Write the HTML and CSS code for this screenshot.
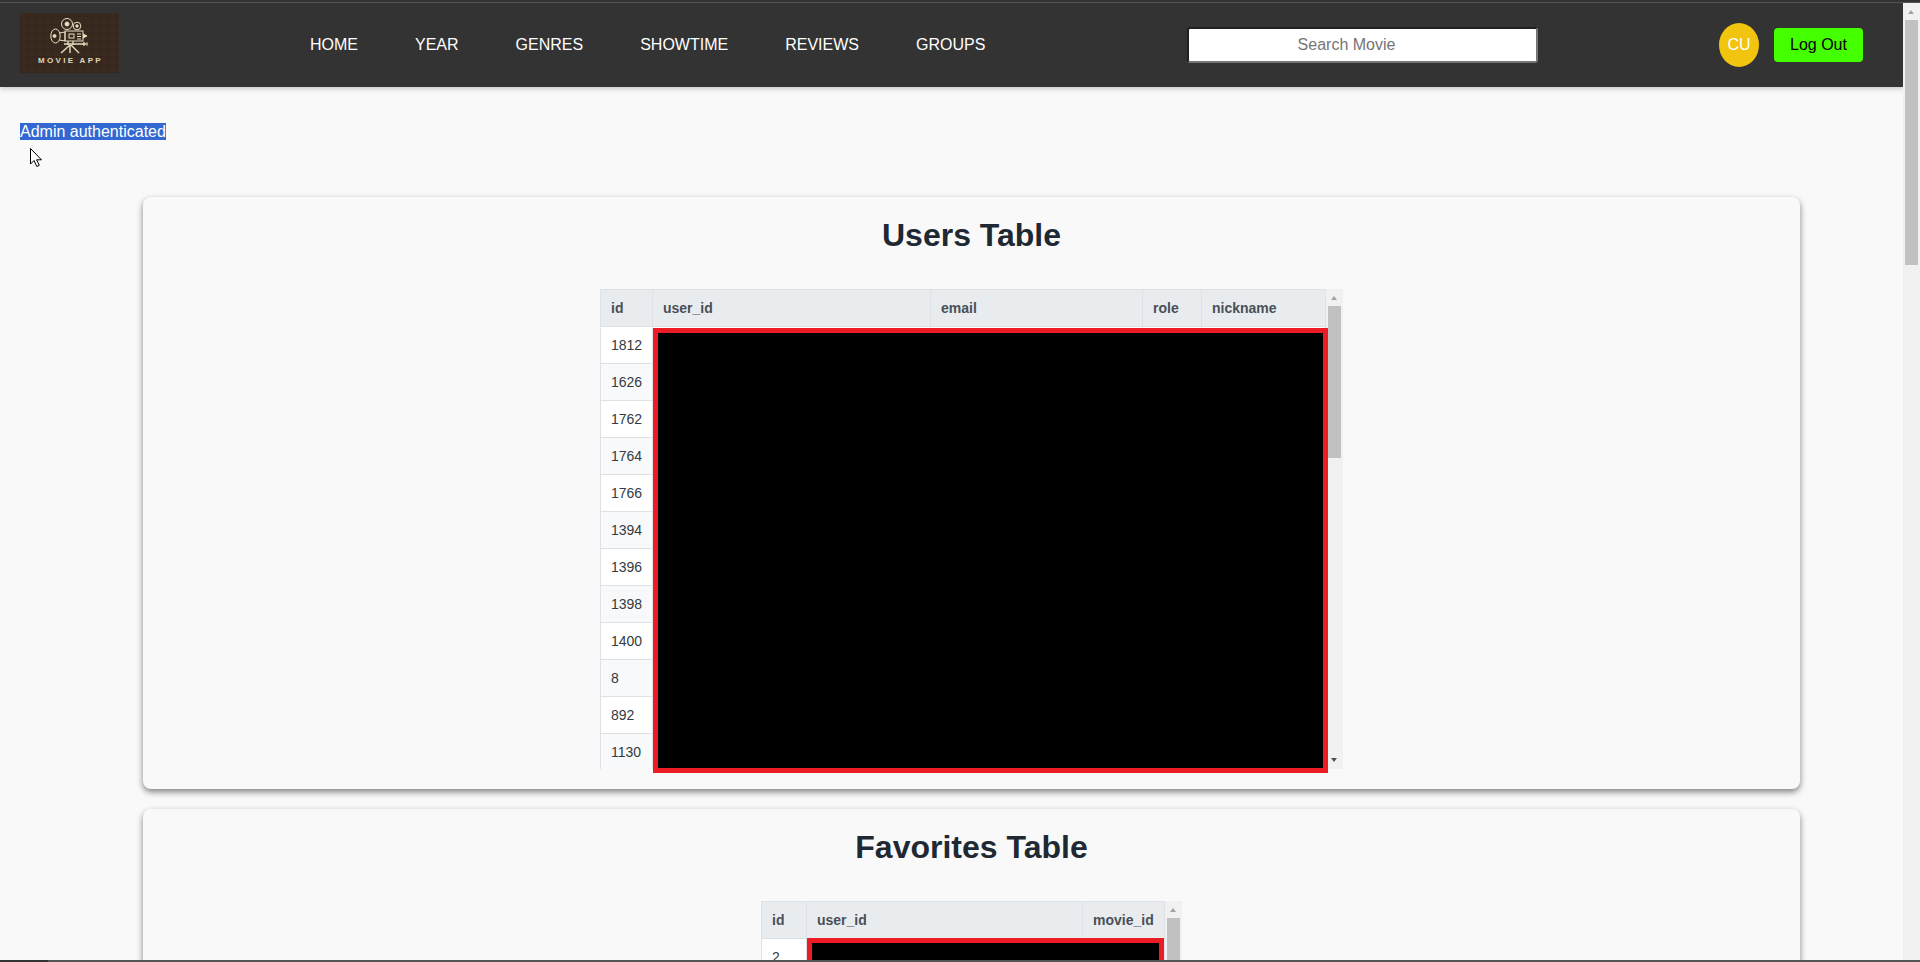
FILE: index.html
```html
<!DOCTYPE html>
<html lang="en">
<head>
    <meta charset="UTF-8">
    <meta name="viewport" content="width=device-width, initial-scale=1.0">
    <title>Movie App Admin</title>
    <link rel="stylesheet" href="styles.css">
</head>
<body>
    <div class="topline"></div>
    <div class="frame">
        <div class="page">
            <header class="navbar">
                <div class="logo">
                    <svg class="logo-art" viewBox="0 0 60 38" fill="none" stroke="#e6dfc0" stroke-width="1">
                        <circle cx="27" cy="8" r="5.5"/>
                        <circle cx="27" cy="8" r="2" fill="#e6dfc0"/>
                        <circle cx="37" cy="10" r="3.8"/>
                        <circle cx="37" cy="10" r="1.2" fill="#e6dfc0"/>
                        <ellipse cx="15.500" cy="20" rx="4.700" ry="7"/>
                        <circle cx="14.500" cy="20" r="1.500" fill="#e6dfc0"/>
                        <path d="M19 17 L25 16 V25 L19 24"/>
                        <rect x="25" y="15" width="18" height="10"/>
                        <rect x="29" y="18" width="5" height="4"/>
                        <path d="M37 18h4M37 20.500h4M37 23h4"/>
                        <path d="M43 18 L47 20 L43 22" fill="#e6dfc0"/>
                        <path d="M24 28 H46 M44 26 V30 M47 26.500 V29.500" stroke-width="1.300"/>
                        <path d="M28 25 V29 M33 25 V29" stroke-width="1.300"/>
                        <path d="M30 29 L21 37 M30 29 L30 37 M31 29 L39 37" stroke-width="1.400"/>
                    </svg>
                    <div class="logo-text">MOVIE APP</div>
                </div>
                <nav class="nav-links">
                    <a href="#">HOME</a>
                    <a href="#">YEAR</a>
                    <a href="#">GENRES</a>
                    <a href="#">SHOWTIME</a>
                    <a href="#">REVIEWS</a>
                    <a href="#">GROUPS</a>
                </nav>
                <input class="search" type="text" placeholder="Search Movie">
                <div class="user-box">
                    <div class="avatar">CU</div>
                    <button class="logout">Log Out</button>
                </div>
            </header>

            <main class="content">
                <p class="auth-msg"><span class="selected">Admin authenticated</span></p>
                <svg class="cursor" viewBox="0 0 12 19" width="12" height="19">
                    <path d="M0.500 0.500 V16 L4 12.500 L6.800 18.500 L9.300 17.300 L6.600 11.800 H11.500 Z" fill="#fff" stroke="#000" stroke-width="1"/>
                </svg>

                <section class="card">
                    <h2>Users Table</h2>
                    <div class="table-wrap users-wrap">
                        <div class="table-clip">
                            <table class="data-table">
                                <colgroup>
                                    <col class="c-id"><col class="c-user"><col class="c-email"><col class="c-role"><col class="c-nick">
                                </colgroup>
                                <thead>
                                    <tr><th>id</th><th>user_id</th><th>email</th><th>role</th><th>nickname</th></tr>
                                </thead>
                                <tbody>
                                    <tr><td>1812</td><td></td><td></td><td></td><td></td></tr>
                                    <tr><td>1626</td><td></td><td></td><td></td><td></td></tr>
                                    <tr><td>1762</td><td></td><td></td><td></td><td></td></tr>
                                    <tr><td>1764</td><td></td><td></td><td></td><td></td></tr>
                                    <tr><td>1766</td><td></td><td></td><td></td><td></td></tr>
                                    <tr><td>1394</td><td></td><td></td><td></td><td></td></tr>
                                    <tr><td>1396</td><td></td><td></td><td></td><td></td></tr>
                                    <tr><td>1398</td><td></td><td></td><td></td><td></td></tr>
                                    <tr><td>1400</td><td></td><td></td><td></td><td></td></tr>
                                    <tr><td>8</td><td></td><td></td><td></td><td></td></tr>
                                    <tr><td>892</td><td></td><td></td><td></td><td></td></tr>
                                    <tr><td>1130</td><td></td><td></td><td></td><td></td></tr>
                                </tbody>
                            </table>
                        </div>
                        <div class="vbar">
                            <span class="arrow-up"></span>
                            <div class="thumb users-thumb"></div>
                            <span class="arrow-down"></span>
                        </div>
                        <div class="redacted users-redacted"></div>
                    </div>
                </section>

                <section class="card">
                    <h2>Favorites Table</h2>
                    <div class="table-wrap fav-wrap">
                        <div class="table-clip">
                            <table class="data-table">
                                <colgroup>
                                    <col class="c-fid"><col class="c-fuser"><col class="c-movie">
                                </colgroup>
                                <thead>
                                    <tr><th>id</th><th>user_id</th><th>movie_id</th></tr>
                                </thead>
                                <tbody>
                                    <tr><td>2</td><td></td><td></td></tr>
                                    <tr><td>4</td><td></td><td></td></tr>
                                </tbody>
                            </table>
                        </div>
                        <div class="vbar">
                            <span class="arrow-up"></span>
                            <div class="thumb fav-thumb"></div>
                        </div>
                        <div class="redacted fav-redacted"></div>
                    </div>
                </section>
            </main>
        </div>
        <div class="vbar page-bar">
            <span class="arrow-up"></span>
            <div class="thumb page-thumb"></div>
        </div>
    </div>
    <div class="bottomline"><div class="bottomline-start"></div></div>
</body>
</html>
```

FILE: styles.css
```css
html, body {
    margin: 0;
    height: 962px;
    overflow: hidden;
}
body {
    font-family: "Liberation Sans", Arial, sans-serif;
    background-color: #f9f9f9;
    display: flex;
    flex-direction: column;
}
.topline {
    height: 3px;
    background-color: #333;
    border-bottom: 1px solid #555;
    box-sizing: border-box;
    flex: none;
}
.frame {
    flex: 1;
    min-height: 0;
    display: flex;
}
.page {
    flex: 1;
    min-width: 0;
    display: flex;
    flex-direction: column;
}
.bottomline {
    height: 2px;
    background-color: #555;
    flex: none;
}
.bottomline-start {
    width: 48px;
    height: 2px;
    background-color: #333;
}

/* navbar */
.navbar {
    height: 84px;
    flex: none;
    display: flex;
    align-items: center;
    padding: 0 40px 0 20px;
    background-color: #333;
    box-shadow: 0 2px 5px rgba(0, 0, 0, 0.2);
    position: relative;
}
.logo {
    width: 99px;
    height: 60px;
    margin-top: -4px;
    display: flex;
    flex-direction: column;
    align-items: center;
    background-color: #3a291f;
    background-image: repeating-linear-gradient(90deg, rgba(0, 0, 0, 0.08) 0 1px, transparent 1px 8px),
        repeating-linear-gradient(0deg, rgba(0, 0, 0, 0.08) 0 1px, transparent 1px 8px);
}
.logo-art {
    width: 60px;
    height: 38px;
    margin-top: 3px;
}
.logo-text {
    color: #ded6b8;
    font-size: 8px;
    font-weight: bold;
    letter-spacing: 2.3px;
    line-height: 10px;
    margin-top: 2px;
    padding-left: 2px;
}
.nav-links {
    display: flex;
    gap: 57px;
    margin-left: 191px;
}
.nav-links a {
    color: #fff;
    font-size: 16px;
    text-decoration: none;
}
.search {
    width: 351px;
    height: 36px;
    box-sizing: border-box;
    margin-left: auto;
    padding: 0 32px 0 0;
    text-align: center;
    font-family: inherit;
    font-size: 16px;
    background-color: #fff;
    border: 2px inset #767676;
    border-radius: 3px;
}
.search::placeholder {
    color: #757575;
}
.user-box {
    display: flex;
    align-items: center;
    gap: 15px;
    margin-left: 181px;
}
.avatar {
    width: 40px;
    height: 44px;
    border-radius: 50%;
    background-color: #f1c40f;
    color: #fff;
    font-size: 16px;
    display: flex;
    align-items: center;
    justify-content: center;
}
.logout {
    width: 89px;
    height: 34px;
    padding: 0;
    border: none;
    border-radius: 4px;
    background-color: #44ff00;
    color: #000;
    font-family: inherit;
    font-size: 16px;
}

/* content */
.content {
    flex: 1;
    min-height: 0;
    overflow: hidden;
    position: relative;
    padding: 36px 103px 0 143px;
}
.auth-msg {
    margin: 0 0 56px -123px;
    font-size: 16px;
    line-height: 18px;
}
.selected {
    background-color: #3367d1;
    color: #fff;
}
.cursor {
    position: absolute;
    left: 30px;
    top: 61px;
}
.card {
    height: 592px;
    box-sizing: border-box;
    margin-bottom: 20px;
    padding-top: 20px;
    background-color: #f9f9f9;
    border-radius: 8px;
    box-shadow: 0 3px 6px rgba(0, 0, 0, 0.48);
}
.card h2 {
    margin: 0 0 35px;
    text-align: center;
    font-size: 32px;
    line-height: 37px;
    color: #1f2933;
}

/* tables */
.table-wrap {
    display: flex;
    margin: 0 auto;
    height: 480px;
    position: relative;
}
.users-wrap {
    width: 743px;
}
.fav-wrap {
    width: 421px;
}
.table-clip {
    flex: 1;
    min-width: 0;
    overflow: hidden;
}
.data-table {
    width: 100%;
    table-layout: fixed;
    border-collapse: collapse;
    font-size: 14px;
    color: #343a40;
}
.c-id { width: 52px; }
.c-user { width: 278px; }
.c-email { width: 212px; }
.c-role { width: 59px; }
.c-fid { width: 45px; }
.c-movie { width: 82px; }
.data-table th,
.data-table td {
    height: 37px;
    box-sizing: border-box;
    padding: 0 10px;
    border: 1px solid #dee2e6;
    text-align: left;
}
.data-table th {
    background-color: #e9ecef;
    color: #495057;
    font-weight: bold;
}
.data-table tbody tr:nth-child(odd) {
    background-color: #fff;
}
.data-table tbody tr:nth-child(even) {
    background-color: #f8f9fa;
}
.redacted {
    position: absolute;
    background-color: #000;
    border: 5px solid #ed1c24;
    box-sizing: border-box;
}
.users-redacted {
    left: 53px;
    top: 39px;
    width: 675px;
    height: 445px;
}
.fav-redacted {
    left: 46px;
    top: 37px;
    width: 357px;
    height: 445px;
}

/* fake scrollbars, same look as the browser ones */
.vbar {
    width: 17px;
    flex: none;
    position: relative;
    background-color: #f1f1f1;
}
.thumb {
    position: absolute;
    left: 2px;
    width: 13px;
    background-color: #c1c1c1;
}
.users-thumb {
    top: 17px;
    height: 152px;
}
.fav-thumb {
    top: 17px;
    height: 152px;
}
.page-bar {
    z-index: 1;
}
.page-thumb {
    top: 17px;
    height: 245px;
}
.arrow-up,
.arrow-down {
    position: absolute;
    left: 5px;
    width: 0;
    height: 0;
    border-left: 3.5px solid transparent;
    border-right: 3.5px solid transparent;
}
.arrow-up {
    top: 7px;
    border-bottom: 4px solid #a3a3a3;
}
.arrow-down {
    bottom: 7px;
    border-top: 4px solid #505050;
}
```
